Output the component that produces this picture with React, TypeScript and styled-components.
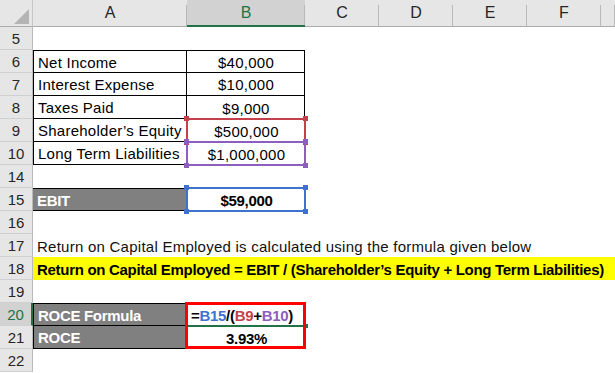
import React from 'react'
import styled, { createGlobalStyle } from 'styled-components'

const GlobalStyle = createGlobalStyle`
  html, body {
    margin: 0;
    padding: 0;
    background: #ffffff;
  }
  body {
    font-family: 'Liberation Sans', Arial, sans-serif;
    color: #000;
  }
`

// excel-ish palette
const GREEN = '#217346'
const HEAD_BG = '#e6e6e6'
const HEAD_ACTIVE = '#d2d2d2'
const FILL_GREY = '#808080'
const REF_BLUE = '#3f72cf'
const REF_RED = '#c4414c'
const REF_PURPLE = '#8b5ec0'

const Sheet = styled.div`
  display: grid;
  grid-template-columns: 33px 154px 118px 74px 74px 74px 74px 1fr;
  grid-template-rows: 27px repeat(15, 23px);
  width: 615px;
  height: 373px;
  overflow: hidden;
  font-size: 15px;
`

const Corner = styled.div`
  background: ${HEAD_BG};
  border-bottom: 1px solid #ababab;
  border-right: 1px solid #c6c6c6;
  box-sizing: border-box;
  display: flex;
  align-items: flex-end;
  justify-content: flex-end;
  padding: 0 3px 2px 0;
`

const ColHead = styled.div<{ active?: boolean }>`
  background: ${p => (p.active ? HEAD_ACTIVE : HEAD_BG)};
  border-bottom: ${p => (p.active ? `2px solid ${GREEN}` : '1px solid #ababab')};
  box-sizing: border-box;
  display: flex;
  align-items: center;
  justify-content: center;
  color: ${p => (p.active ? GREEN : '#262626')};
  font-size: 16px;
  padding-top: ${p => (p.active ? '1px' : '0')};
  position: relative;

  &::after {
    content: '';
    position: absolute;
    right: 0;
    top: 5px;
    bottom: 0;
    width: 1px;
    background: #b9b9b9;
  }
`

const RowHead = styled.div<{ active?: boolean }>`
  background: ${p => (p.active ? HEAD_ACTIVE : HEAD_BG)};
  border-bottom: 1px solid #cfcfcf;
  border-right: ${p => (p.active ? `2px solid ${GREEN}` : '1px solid #b9b9b9')};
  box-sizing: border-box;
  display: flex;
  align-items: center;
  justify-content: center;
  color: ${p => (p.active ? GREEN : '#262626')};
  font-size: 15px;
  padding-top: 1px;
`

type Edges = { t?: boolean; b?: boolean; l?: boolean; r?: boolean }

const Cell = styled.div<{
  edges?: Edges
  fill?: string
  align?: 'left' | 'center'
  bold?: boolean
  ink?: string
  span?: number
}>`
  position: relative;
  box-sizing: border-box;
  display: flex;
  align-items: center;
  justify-content: ${p => (p.align === 'center' ? 'center' : 'flex-start')};
  padding: 1px 3px 0 4px;
  white-space: nowrap;
  background: ${p => p.fill || 'transparent'};
  color: ${p => p.ink || '#000'};
  font-weight: ${p => (p.bold ? 700 : 400)};
  letter-spacing: ${p => (p.bold ? '-0.3px' : '0.25px')};
  grid-column: ${p => (p.span ? `span ${p.span}` : 'auto')};
  border-top: ${p => (p.edges?.t ? '1px solid #000' : 'none')};
  border-bottom: ${p => (p.edges?.b ? '1px solid #000' : 'none')};
  border-left: ${p => (p.edges?.l ? '1px solid #000' : 'none')};
  border-right: ${p => (p.edges?.r ? '1px solid #000' : 'none')};
  overflow: visible;
`

// coloured outline that excel draws round a referenced range
const RefBox = styled.div<{ tone: string }>`
  position: absolute;
  left: -1px;
  top: -1px;
  right: -1px;
  bottom: -1px;
  border: 2px solid ${p => p.tone};
  pointer-events: none;
  z-index: 2;
`

const Handle = styled.span<{ tone: string; x: 'l' | 'r'; y: 't' | 'b' }>`
  position: absolute;
  width: 5px;
  height: 5px;
  background: ${p => p.tone};
  ${p => (p.x === 'l' ? 'left: -4px;' : 'right: -4px;')}
  ${p => (p.y === 't' ? 'top: -4px;' : 'bottom: -4px;')}
`

const FormulaFrame = styled.div`
  position: absolute;
  left: -2px;
  top: -1px;
  width: 121px;
  height: 47px;
  border: 3px solid #ff0000;
  box-sizing: border-box;
  z-index: 3;
  pointer-events: none;
`

const ActiveLine = styled.div`
  position: absolute;
  left: 1px;
  right: 0;
  bottom: -1px;
  height: 2px;
  background: ${GREEN};
  z-index: 2;

  &::after {
    content: '';
    position: absolute;
    right: -3px;
    top: -1px;
    width: 4px;
    height: 4px;
    background: ${GREEN};
  }
`

const Ref = styled.span<{ tone: string }>`
  color: ${p => p.tone};
`

const RefRange: React.FC<{ tone: string }> = ({ tone }) => (
  <RefBox tone={tone}>
    <Handle tone={tone} x="l" y="t" />
    <Handle tone={tone} x="r" y="t" />
    <Handle tone={tone} x="l" y="b" />
    <Handle tone={tone} x="r" y="b" />
  </RefBox>
)

const Blank: React.FC<{ count: number }> = ({ count }) => (
  <>
    {Array.from({ length: count }).map((_, i) => (
      <Cell key={i} />
    ))}
  </>
)

const columns = ['A', 'B', 'C', 'D', 'E', 'F', '']

const App: React.FC = () => {
  return (
    <>
      <GlobalStyle />
      <Sheet>
        <Corner>
          <svg width="15" height="15" viewBox="0 0 15 15">
            <polygon points="15,0 15,15 0,15" fill="#b4b4b4" />
          </svg>
        </Corner>
        {columns.map(c => (
          <ColHead key={c || 'g'} active={c === 'B'}>{c}</ColHead>
        ))}

        <RowHead>5</RowHead>
        <Blank count={7} />

        <RowHead>6</RowHead>
        <Cell edges={{ t: true, b: true, l: true, r: true }}>Net Income</Cell>
        <Cell edges={{ t: true, b: true, r: true }} align="center">$40,000</Cell>
        <Blank count={5} />

        <RowHead>7</RowHead>
        <Cell edges={{ b: true, l: true, r: true }}>Interest Expense</Cell>
        <Cell edges={{ b: true, r: true }} align="center">$10,000</Cell>
        <Blank count={5} />

        <RowHead>8</RowHead>
        <Cell edges={{ b: true, l: true, r: true }}>Taxes Paid</Cell>
        <Cell edges={{ r: true }} align="center">$9,000</Cell>
        <Blank count={5} />

        <RowHead>9</RowHead>
        <Cell edges={{ b: true, l: true }}>Shareholder’s Equity</Cell>
        <Cell align="center">
          $500,000
          <RefRange tone={REF_RED} />
        </Cell>
        <Blank count={5} />

        <RowHead>10</RowHead>
        <Cell edges={{ b: true, l: true }}>Long Term Liabilities</Cell>
        <Cell align="center">
          $1,000,000
          <RefRange tone={REF_PURPLE} />
        </Cell>
        <Blank count={5} />

        <RowHead>14</RowHead>
        <Blank count={7} />

        <RowHead>15</RowHead>
        <Cell edges={{ t: true, b: true }} fill={FILL_GREY} ink="#fff" bold>EBIT</Cell>
        <Cell align="center" bold>
          $59,000
          <RefRange tone={REF_BLUE} />
        </Cell>
        <Blank count={5} />

        <RowHead>16</RowHead>
        <Blank count={7} />

        <RowHead>17</RowHead>
        <Cell ink="#111">Return on Capital Employed is calculated using the formula given below</Cell>
        <Blank count={6} />

        <RowHead>18</RowHead>
        <Cell span={7} fill="#ffff00" bold>
          Return on Capital Employed = EBIT / (Shareholder’s Equity + Long Term Liabilities)
        </Cell>

        <RowHead>19</RowHead>
        <Blank count={7} />

        <RowHead active>20</RowHead>
        <Cell edges={{ t: true, b: true, l: true }} fill={FILL_GREY} ink="#fff" bold>ROCE Formula</Cell>
        <Cell bold>
          =<Ref tone={REF_BLUE}>B15</Ref>/(<Ref tone={REF_RED}>B9</Ref>+<Ref tone={REF_PURPLE}>B10</Ref>)
          <ActiveLine />
          <FormulaFrame />
        </Cell>
        <Blank count={5} />

        <RowHead>21</RowHead>
        <Cell edges={{ b: true, l: true }} fill={FILL_GREY} ink="#fff" bold>ROCE</Cell>
        <Cell align="center" bold>3.93%</Cell>
        <Blank count={5} />

        <RowHead>22</RowHead>
        <Blank count={7} />
      </Sheet>
    </>
  )
}

export default App
